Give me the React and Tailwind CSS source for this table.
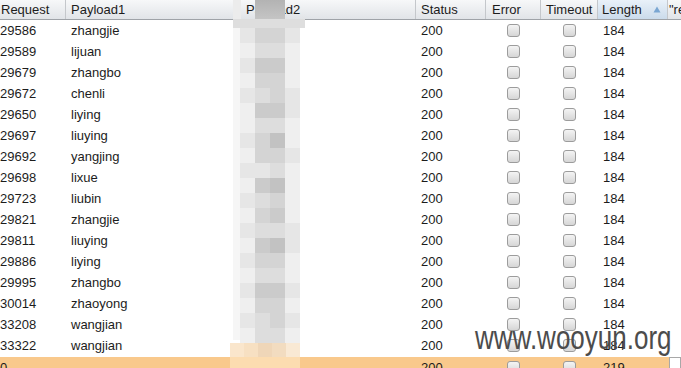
const rows = [
  ['29586', 'zhangjie'],
  ['29589', 'lijuan'],
  ['29679', 'zhangbo'],
  ['29672', 'chenli'],
  ['29650', 'liying'],
  ['29697', 'liuying'],
  ['29692', 'yangjing'],
  ['29698', 'lixue'],
  ['29723', 'liubin'],
  ['29821', 'zhangjie'],
  ['29811', 'liuying'],
  ['29886', 'liying'],
  ['29995', 'zhangbo'],
  ['30014', 'zhaoyong'],
  ['33208', 'wangjian'],
  ['33322', 'wangjian'],
];

// mosaic shades, lightest to darkest
const shades = [
  'bg-[#f7f7f7]',
  'bg-[#efefef]',
  'bg-[#e6e6e6]',
  'bg-[#dddddd]',
  'bg-[#d4d4d4]',
  'bg-[#cbcbcb]',
  'bg-[#c2c2c2]',
];

const mosaic = [
  '2442', '1331', '2551', '1441', '2342', '1552', '1331', '2461', '1442', '2231', '1561',
  '2341', '1451', '2332', '1562', '2441', '1331', '2552', '1441', '2342', '1331',
];

function Checkbox() {
  return (
    <span className="block w-[13px] h-[13px] rounded-[3px] border border-[#9c9c9c] bg-linear-to-b from-[#f4f4f4] to-[#d6d6d6]" />
  );
}

function HeaderCell({ w, children, className = '' }) {
  return (
    <div className={`${w} shrink-0 h-full flex items-center border-r border-[#c4c7cb] overflow-hidden whitespace-nowrap ${className}`}>
      {children}
    </div>
  );
}

function Row({ req, p1, status, len, orange }) {
  return (
    <div className={`h-[21px] flex items-center shrink-0 ${orange ? 'bg-[#f9c98c] mt-[1px]' : ''}`}>
      <div className="w-[66px] shrink-0">{req}</div>
      <div className="w-[175px] shrink-0 pl-[5px]">{p1}</div>
      <div className="w-[175px] shrink-0" />
      <div className="w-[70px] shrink-0 pl-[5px]">{status}</div>
      <div className="w-[55px] shrink-0 flex justify-center"><Checkbox /></div>
      <div className="w-[57px] shrink-0 flex justify-center"><Checkbox /></div>
      <div className="w-[70px] shrink-0 pl-[5px]">{len}</div>
      <div className={`flex-1 h-full ${orange ? 'bg-white border border-[#a8a8a8] ml-[1px]' : ''}`} />
    </div>
  );
}

export default function App() {
  return (
    <div className="relative w-[681px] h-[368px] overflow-hidden bg-white text-[13px] leading-none text-[#1c1c1c] font-['Liberation_Sans',Arial,sans-serif]">
      {/* header */}
      <div className="h-[20px] flex border-b border-[#9fa3a8] bg-linear-to-b from-[#f7f8f9] to-[#e1e4e8]">
        <HeaderCell w="w-[66px]" className="pl-[1px]">Request</HeaderCell>
        <HeaderCell w="w-[175px]" className="pl-[5px]">Payload1</HeaderCell>
        <HeaderCell w="w-[175px]" className="pl-[5px]">Payload2</HeaderCell>
        <HeaderCell w="w-[70px]" className="pl-[5px]">Status</HeaderCell>
        <HeaderCell w="w-[55px]" className="pl-[6px]">Error</HeaderCell>
        <HeaderCell w="w-[57px]" className="pl-[5px]">Timeout</HeaderCell>
        <HeaderCell w="w-[70px]" className="pl-[4px] justify-between pr-[6px] bg-linear-to-b from-[#e9f1f9] to-[#cbdbeb]">
          <span>Length</span>
          <svg width="8" height="7" viewBox="0 0 8 7">
            <path d="M4 0.5 L7.5 6.5 L0.5 6.5 Z" fill="#7aa6d2" />
          </svg>
        </HeaderCell>
        <div className="flex-1 h-full flex items-center pl-[1px] overflow-hidden whitespace-nowrap">"response</div>
      </div>

      {/* rows */}
      <div className="flex flex-col">
        {rows.map(([req, p1]) => (
          <Row key={req} req={req} p1={p1} status="200" len="184" />
        ))}
        <Row req="0" p1="" status="200" len="219" orange />
      </div>

      {/* pixelated Payload2 values */}
      <div className="absolute left-[233px] top-0 w-[72px] h-[28px] flex">
        <div className="w-[8px] h-full bg-[#ececec]" />
        <div className="w-[14px] h-full" />
        <div className="w-[30px] h-full bg-linear-to-b from-[#b3b3b3] to-[#cdcdcd]" />
        <div className="w-[20px] h-full bg-linear-to-b from-transparent via-transparent to-[#e4e4e4]" />
      </div>
      <div className="absolute left-[233px] top-[19px] w-[72px] h-[9px] bg-[#dedede]" />
      <div className="absolute left-[233px] top-[28px] w-[7px] h-[312px] bg-[#f6f6f6]" />
      <div className="absolute left-[240px] top-[28px] w-[60px] flex flex-col">
        {mosaic.map((r, i) => (
          <div key={i} className="h-[15px] grid grid-cols-4">
            {r.split('').map((c, j) => (
              <div key={j} className={shades[Number(c)]} />
            ))}
          </div>
        ))}
      </div>
      <div className="absolute left-[230px] top-[343px] w-[70px] h-[14px] grid grid-cols-5">
        <div className="bg-[#fae6cc]" />
        <div className="bg-[#f7e0c2]" />
        <div className="bg-[#efd6b8]" />
        <div className="bg-[#f2dcc0]" />
        <div className="bg-[#f9e9d4]" />
      </div>
      <div className="absolute left-[230px] top-[357px] w-[70px] h-[11px] bg-[#fcdcb0]" />

      {/* watermark */}
      <div className="absolute left-[475px] top-[328px] text-[26px] leading-none text-[#4c4c4c] scale-y-[1.26] origin-bottom whitespace-nowrap">
        www.wooyun.org
      </div>
    </div>
  );
}
